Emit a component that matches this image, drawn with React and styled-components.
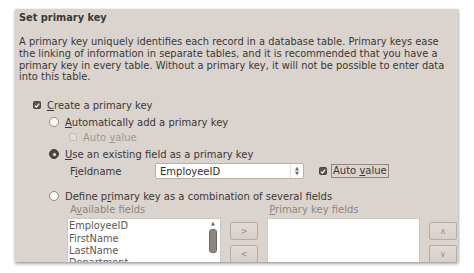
import React from "react";
import styled, { createGlobalStyle } from "styled-components";

const GlobalStyle = createGlobalStyle`
  body {
    margin: 0;
    background: #ffffff;
    font-family: "DejaVu Sans", "Liberation Sans", sans-serif;
  }
`;

const Page = styled.div`
  width: 474px;
  height: 273px;
  padding: 9px 0 0 15px;
  box-sizing: border-box;
`;

const Panel = styled.div`
  width: 443px;
  height: 253px;
  background: #dbd4ce;
  box-shadow: 0 2px 3px rgba(0, 0, 0, 0.35), 1px 0 2px rgba(0, 0, 0, 0.12);
  overflow: hidden;
  padding: 2px 0 0 4px;
  box-sizing: border-box;
  color: #3a3735;
  font-size: 10px;
`;

const Title = styled.div`
  font-weight: bold;
  font-size: 9.8px;
  line-height: 14px;
`;

const Intro = styled.p`
  margin: 11px 0 0 0;
  line-height: 11.8px;
  font-size: 9.9px;
  white-space: nowrap;
`;

const Options = styled.div`
  display: flex;
  flex-direction: column;
  margin-top: 15px;
`;

const Row = styled.div`
  display: flex;
  align-items: center;
  gap: 6px;
  height: 14px;
  margin-left: ${(p) => p.$indent || 0}px;
  margin-top: ${(p) => p.$top || 0}px;
  color: ${(p) => (p.$disabled ? "#9d9791" : "inherit")};
`;

const Box = styled.span`
  width: 8px;
  height: 8px;
  border-radius: 1.5px;
  box-sizing: border-box;
  display: inline-flex;
  align-items: center;
  justify-content: center;
  flex-shrink: 0;
  background: ${(p) => (p.$checked ? "#5b5451" : p.$disabled ? "#e2ddd8" : "#fbfaf9")};
  border: 1px solid ${(p) => (p.$checked ? "#4a4441" : p.$disabled ? "#bfb8b2" : "#8f8782")};
`;

const Radio = styled.span`
  width: 10px;
  height: 10px;
  border-radius: 50%;
  box-sizing: border-box;
  flex-shrink: 0;
  display: inline-flex;
  align-items: center;
  justify-content: center;
  background: ${(p) => (p.$checked ? "#4f4946" : "#fdfcfb")};
  border: 1px solid ${(p) => (p.$checked ? "#3f3a37" : "#8f8782")};
  &::after {
    content: "";
    width: 3px;
    height: 3px;
    border-radius: 50%;
    background: ${(p) => (p.$checked ? "#f4f1ee" : "transparent")};
  }
`;

const Check = () => (
  <svg width="7" height="7" viewBox="0 0 7 7">
    <path d="M1 3.6 L2.8 5.3 L6 1.4" stroke="#fff" strokeWidth="1.4" fill="none" />
  </svg>
);

const Key = styled.span`
  text-decoration: underline;
  text-underline-offset: 1px;
`;

const FieldRow = styled.div`
  display: flex;
  align-items: center;
  height: 16px;
  margin: 2px 0 0 48px;
`;

const FieldLabel = styled.span`
  width: 88px;
  padding-left: 3px;
  box-sizing: border-box;
`;

const Select = styled.div`
  width: 149px;
  height: 16px;
  box-sizing: border-box;
  background: #ffffff;
  border: 1px solid #b7afa8;
  border-radius: 2px;
  display: flex;
  align-items: center;
  padding-left: 4px;
  font-size: 10px;
  color: #2f2c2a;
`;

const SelectText = styled.span`
  flex: 1;
`;

const Spin = styled.span`
  width: 12px;
  height: 14px;
  border-left: 1px solid #e3ded9;
  display: flex;
  flex-direction: column;
  align-items: center;
  justify-content: center;
  font-size: 5px;
  line-height: 5px;
  color: #6d6662;
`;

const AutoCheck = styled.div`
  display: flex;
  align-items: center;
  gap: 4px;
  margin-left: 15px;
`;

const Focus = styled.span`
  border: 1px solid #8e8782;
  padding: 0 1px;
  line-height: 12px;
`;

const SubLabel = styled.span`
  color: #8d8781;
  margin-left: ${(p) => p.$left}px;
`;

const LabelRow = styled.div`
  display: flex;
  height: 12px;
  align-items: center;
  margin-left: 51px;
`;

const Picker = styled.div`
  display: grid;
  grid-template-columns: 154px 28px 153px 28px;
  column-gap: 9px;
  margin: 3px 0 0 48px;
`;

const List = styled.div`
  height: 60px;
  background: #ffffff;
  border: 1px solid #cfc8c2;
  box-sizing: border-box;
  display: flex;
`;

const Items = styled.div`
  flex: 1;
  padding: 1px 0 0 1px;
  font-size: 9.8px;
  line-height: 12.4px;
  color: #5c5753;
`;

const Scroll = styled.div`
  width: 12px;
  margin: 1px 1px 0 0;
  display: flex;
  flex-direction: column;
  align-items: center;
  font-size: 5px;
  color: #6d6662;
  gap: 3px;
`;

const Thumb = styled.div`
  width: 6px;
  height: 22px;
  border-radius: 3px;
  background: #8c8580;
  border: 1px solid #6f6965;
`;

const Buttons = styled.div`
  display: flex;
  flex-direction: column;
  gap: 5px;
  padding-top: 4px;
`;

const Btn = styled.div`
  height: 18px;
  box-sizing: border-box;
  border: 1px solid #b4aca5;
  border-radius: 2px;
  background: linear-gradient(#e1dbd6, #d6cfc9);
  display: flex;
  align-items: center;
  justify-content: center;
  font-size: 8px;
  color: #918a85;
`;

export default function App() {
  return (
    <>
      <GlobalStyle />
      <Page>
        <Panel>
          <Title>Set primary key</Title>
          <Intro>
            A primary key uniquely identifies each record in a database table. Primary keys ease
            <br />
            the linking of information in separate tables, and it is recommended that you have a
            <br />
            primary key in every table. Without a primary key, it will not be possible to enter data
            <br />
            into this table.
          </Intro>
          <Options>
            <Row $indent={14}>
              <Box $checked><Check /></Box>
              <span><Key>C</Key>reate a primary key</span>
            </Row>
            <Row $indent={30} $top={3}>
              <Radio />
              <span><Key>A</Key>utomatically add a primary key</span>
            </Row>
            <Row $indent={50} $top={1} $disabled>
              <Box $disabled />
              <span>Auto <Key>v</Key>alue</span>
            </Row>
            <Row $indent={30} $top={3}>
              <Radio $checked />
              <span><Key>U</Key>se an existing field as a primary key</span>
            </Row>
            <FieldRow>
              <FieldLabel>F<Key>i</Key>eldname</FieldLabel>
              <Select>
                <SelectText>EmployeeID</SelectText>
                <Spin><span>▲</span><span>▼</span></Spin>
              </Select>
              <AutoCheck>
                <Box $checked><Check /></Box>
                <Focus>Auto <Key>v</Key>alue</Focus>
              </AutoCheck>
            </FieldRow>
            <Row $indent={30} $top={10}>
              <Radio />
              <span>Define p<Key>r</Key>imary key as a combination of several fields</span>
            </Row>
            <LabelRow>
              <SubLabel $left={0}>A<Key>v</Key>ailable fields</SubLabel>
              <SubLabel $left={124}><Key>P</Key>rimary key fields</SubLabel>
            </LabelRow>
            <Picker>
              <List>
                <Items>
                  <div>EmployeeID</div>
                  <div>FirstName</div>
                  <div>LastName</div>
                  <div>Department</div>
                </Items>
                <Scroll>
                  <span>▲</span>
                  <Thumb />
                </Scroll>
              </List>
              <Buttons>
                <Btn>&gt;</Btn>
                <Btn>&lt;</Btn>
              </Buttons>
              <List />
              <Buttons>
                <Btn>∧</Btn>
                <Btn>∨</Btn>
              </Buttons>
            </Picker>
          </Options>
        </Panel>
      </Page>
    </>
  );
}
